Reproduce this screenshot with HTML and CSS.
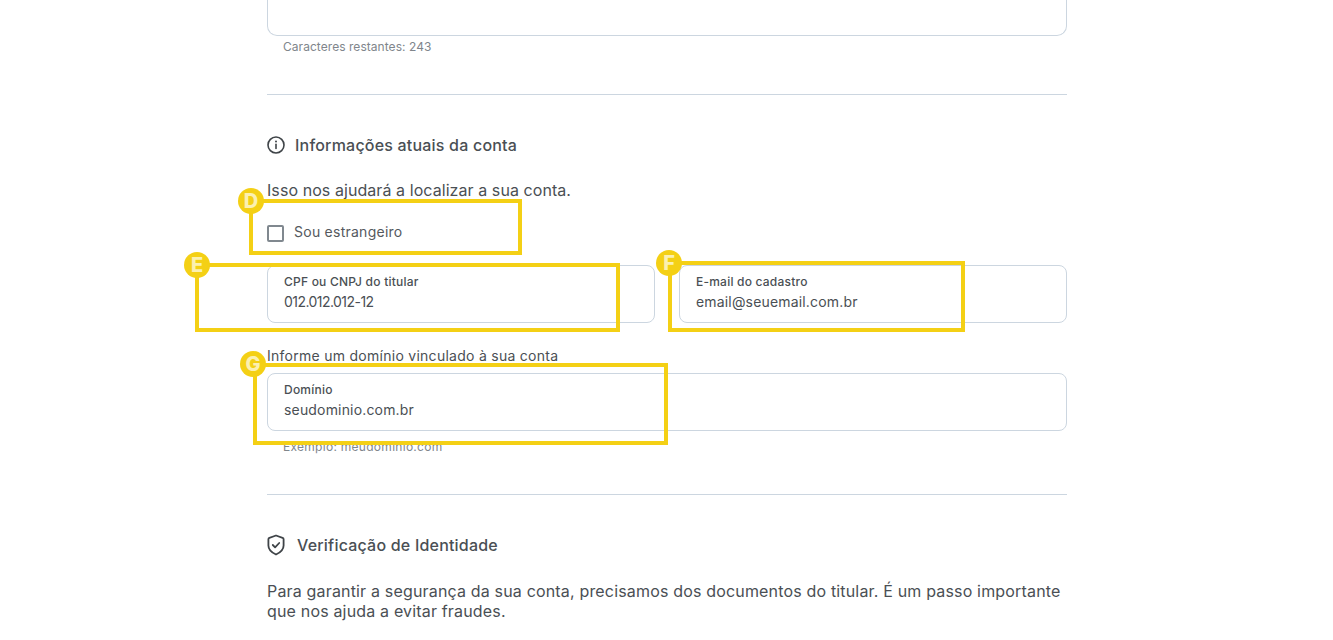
FILE: index.html
```html
<!DOCTYPE html>
<html lang="pt-BR">
<head>
<meta charset="utf-8">
<title>Informações atuais da conta</title>
<link rel="stylesheet" href="styles.css">
</head>
<body>
<main class="page">
  <div class="textarea"></div>
  <p class="hint hint-chars">Caracteres restantes: 243</p>
  <hr class="rule rule-first">
  <h2 class="heading heading-info">
    <svg class="icon" viewBox="0 0 18 18" width="18" height="18" fill="none" stroke="#3f4448" stroke-width="1.6" stroke-linecap="round"><circle cx="9" cy="9" r="8"/><path d="M9 8.400v4"/><path d="M9 5.500v.1" stroke-width="2"/></svg>
    <span>Informações atuais da conta</span>
  </h2>
  <p class="text text-intro">Isso nos ajudará a localizar a sua conta.</p>
  <label class="check"><span class="box"></span><span class="check-label">Sou estrangeiro</span></label>
  <div class="row">
    <div class="field"><span class="field-label">CPF ou CNPJ do titular</span><span class="field-value field-value-num">012.012.012-12</span></div>
    <div class="field"><span class="field-label">E-mail do cadastro</span><span class="field-value">email@seuemail.com.br</span></div>
  </div>
  <p class="text text-domain">Informe um domínio vinculado à sua conta</p>
  <div class="field"><span class="field-label">Domínio</span><span class="field-value">seudominio.com.br</span></div>
  <p class="hint hint-example">Exemplo: meudominio.com</p>
  <hr class="rule rule-second">
  <h2 class="heading heading-shield">
    <svg class="icon" viewBox="0 0 18 22" width="18" height="22" fill="none" stroke="#3f4448" stroke-width="1.800" stroke-linecap="round" stroke-linejoin="round"><path d="M9 1.500l6.600 2.300c.6.200 1 .8 1 1.400v6.300c0 3.900-3.200 7-7.600 9-4.400-2-7.600-5.100-7.600-9V5.200c0-.6.400-1.200 1-1.400z"/><path d="M5.800 11l2.300 2.300 4.100-4.300"/></svg>
    <span>Verificação de Identidade</span>
  </h2>
  <p class="text text-security">Para garantir a segurança da sua conta, precisamos dos documentos do titular. É um passo importante que nos ajuda a evitar fraudes.</p>
</main>
<div class="mark mark-d"></div>
<div class="mark mark-e"></div>
<div class="mark mark-f"></div>
<div class="mark mark-g"></div>
<span class="badge badge-d">D</span>
<span class="badge badge-e">E</span>
<span class="badge badge-f">F</span>
<span class="badge badge-g">G</span>
</body>
</html>
```
FILE: styles.css
```css
* { box-sizing: border-box; }
html, body { margin: 0; padding: 0; height: 640px; overflow: hidden; background: #fff; }
body { position: relative; font-family: "Inter", "Liberation Sans", sans-serif; color: #4a4f54; }
.page { width: 800px; margin-left: 267px; display: flex; flex-direction: column; }
.textarea { height: 36px; border: 1px solid #ccd6e0; border-top: 0; border-radius: 0 0 10px 10px; }
.hint { margin: 0; padding-left: 16px; font-size: 12px; line-height: 14px; color: #80868c; letter-spacing: .05px; }
.hint-chars { margin-top: 4px; }
.rule { width: 100%; margin: 0; border: 0; border-top: 1px solid #ccd6e0; }
.rule-first { margin-top: 40px; }
.heading { margin: 0; display: flex; align-items: center; height: 20px; font-size: 16px; line-height: 22px; font-weight: 500; letter-spacing: .2px; color: #4a4f54; }
.heading-info { margin-top: 40px; gap: 10px; }
.heading-shield { margin-top: 40px; gap: 12px; }
.text { margin: 0; font-size: 16px; line-height: 20px; color: #4a4f54; }
.text-intro { margin-top: 25px; letter-spacing: .07px; }
.check { margin-top: 24px; height: 18px; display: flex; align-items: center; gap: 10px; font-size: 14px; line-height: 16px; letter-spacing: .25px; color: #55595e; }
.check-label { margin-bottom: 2px; }
.box { width: 17px; height: 17px; border: 2px solid #80888f; border-radius: 2px; }
.row { margin-top: 23px; display: flex; gap: 24px; }
.row .field { flex: 1; }
.field { height: 58px; padding: 9px 16px 0; border: 1px solid #ccd6e0; border-radius: 8px; display: flex; flex-direction: column; }
.field-label { font-size: 12px; line-height: 14px; font-weight: 500; letter-spacing: .22px; color: #4a4f54; }
.field-value { margin-top: 3px; font-size: 14px; line-height: 20px; letter-spacing: .17px; color: #4a4f54; }
.field-value-num { letter-spacing: -.55px; }
.text-domain { margin-top: 23px; margin-bottom: 7px; font-size: 14px; letter-spacing: .27px; }
.hint-example { margin-top: 9px; letter-spacing: .28px; }
.rule-second { margin-top: 40px; }
.text-security { margin-top: 26px; letter-spacing: .17px; }
.mark { position: absolute; border: 4px solid #f4d015; }
.mark-d { left: 249px; top: 199px; width: 273px; height: 56px; }
.mark-e { left: 195px; top: 263px; width: 425px; height: 69px; }
.mark-f { left: 668px; top: 261px; width: 297px; height: 71px; }
.mark-g { left: 253px; top: 363px; width: 415px; height: 82px; }
.badge { position: absolute; width: 26px; height: 26px; border-radius: 50%; background: #f4d015; color: #fbf0b0; font-size: 20px; font-weight: 800; line-height: 26px; text-align: center; }
.badge-d { left: 238px; top: 188px; }
.badge-e { left: 184px; top: 252px; }
.badge-f { left: 656px; top: 250px; }
.badge-g { left: 240px; top: 351px; }
```
